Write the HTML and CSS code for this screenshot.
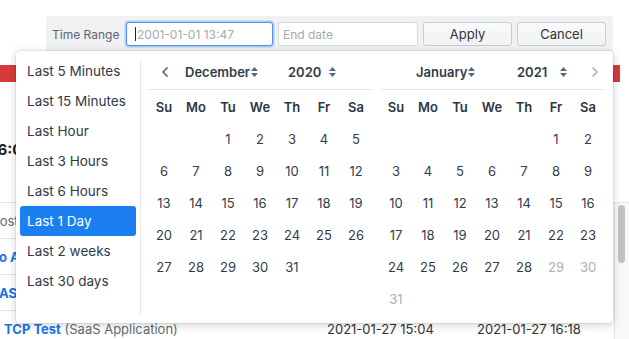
FILE: index.html
```html
<!DOCTYPE html>
<html>
<head>
<meta charset="utf-8">
<link rel="stylesheet" href="styles.css">
</head>
<body>
<div class="page">
  <div class="toolbar">
    <span class="tb-label">Time Range</span>
    <div class="field field-focus"><span class="caret"></span><span class="ph">2001-01-01 13:47</span></div>
    <div class="field field-end"><span class="ph">End date</span></div>
    <button class="btn">Apply</button>
    <button class="btn">Cancel</button>
  </div>
  <div class="alert"></div>
  <div class="summary">16:00</div>
  <div class="table-wrap">
    <div class="table">
      <div class="row"><span class="name muted indent-host">Host</span></div>
      <div class="row"><span class="name link indent-demo">Demo App</span></div>
      <div class="row"><span class="name link indent-asia">ASIA</span></div>
      <div class="row row-grid"><span class="name"><span class="link">TCP Test</span> <span class="muted">(SaaS Application)</span></span><span class="date">2021-01-27 15:04</span><span class="date">2021-01-27 16:18</span></div>
    </div>
    <div class="track"><div class="thumb"></div></div>
  </div>

  <div class="picker">
    <ul class="ranges">
      <li>Last 5 Minutes</li>
      <li>Last 15 Minutes</li>
      <li>Last Hour</li>
      <li>Last 3 Hours</li>
      <li>Last 6 Hours</li>
      <li class="active">Last 1 Day</li>
      <li>Last 2 weeks</li>
      <li>Last 30 days</li>
    </ul>
    <div class="sep"></div>
    <div class="cals">
      <div class="cal cal-left">
        <div class="cal-head">
          <span class="nav"><svg width="6" height="10" viewBox="0 0 6 10"><path d="M5 1 L1 5 L5 9" fill="none" stroke="#566070" stroke-width="1.7" stroke-linecap="round" stroke-linejoin="round"/></svg></span>
          <span class="month">December<svg class="updown" width="7" height="10" viewBox="0 0 7 10"><path d="M0 4 L3.5 0 L7 4 Z M0 6 L3.5 10 L7 6 Z" fill="#5b6577"/></svg></span>
          <span class="year">2020<svg class="updown" width="7" height="10" viewBox="0 0 7 10"><path d="M0 4 L3.5 0 L7 4 Z M0 6 L3.5 10 L7 6 Z" fill="#5b6577"/></svg></span>
        </div>
        <div class="grid">
          <span class="dow">Su</span><span class="dow">Mo</span><span class="dow">Tu</span><span class="dow">We</span><span class="dow">Th</span><span class="dow">Fr</span><span class="dow">Sa</span>
          <span></span><span></span><span>1</span><span>2</span><span>3</span><span>4</span><span>5</span>
          <span>6</span><span>7</span><span>8</span><span>9</span><span>10</span><span>11</span><span>12</span>
          <span>13</span><span>14</span><span>15</span><span>16</span><span>17</span><span>18</span><span>19</span>
          <span>20</span><span>21</span><span>22</span><span>23</span><span>24</span><span>25</span><span>26</span>
          <span>27</span><span>28</span><span>29</span><span>30</span><span>31</span>
        </div>
      </div>
      <div class="cal cal-right">
        <div class="cal-head">
          <span class="spacer"></span>
          <span class="month">January<svg class="updown" width="7" height="10" viewBox="0 0 7 10"><path d="M0 4 L3.5 0 L7 4 Z M0 6 L3.5 10 L7 6 Z" fill="#5b6577"/></svg></span>
          <span class="year">2021<svg class="updown" width="7" height="10" viewBox="0 0 7 10"><path d="M0 4 L3.5 0 L7 4 Z M0 6 L3.5 10 L7 6 Z" fill="#5b6577"/></svg></span>
          <span class="nav nav-next"><svg width="6" height="10" viewBox="0 0 6 10"><path d="M1 1 L5 5 L1 9" fill="none" stroke="#aab1ba" stroke-width="1.7" stroke-linecap="round" stroke-linejoin="round"/></svg></span>
        </div>
        <div class="grid">
          <span class="dow">Su</span><span class="dow">Mo</span><span class="dow">Tu</span><span class="dow">We</span><span class="dow">Th</span><span class="dow">Fr</span><span class="dow">Sa</span>
          <span></span><span></span><span></span><span></span><span></span><span>1</span><span>2</span>
          <span>3</span><span>4</span><span>5</span><span>6</span><span>7</span><span>8</span><span>9</span>
          <span>10</span><span>11</span><span>12</span><span>13</span><span>14</span><span>15</span><span>16</span>
          <span>17</span><span>18</span><span>19</span><span>20</span><span>21</span><span>22</span><span>23</span>
          <span>24</span><span>25</span><span>26</span><span>27</span><span>28</span><span class="off">29</span><span class="off">30</span>
          <span class="off">31</span>
        </div>
      </div>
    </div>
  </div>
</div>
</body>
</html>
```
FILE: styles.css
```css
* { box-sizing: border-box; }
html, body { margin: 0; padding: 0; background: #fff; }
body {
  font-family: Inter, "Noto Sans", "Liberation Sans", sans-serif;
  color: #323c4b;
  width: 629px;
  height: 339px;
  overflow: hidden;
}
.page { position: relative; height: 339px; display: flow-root; }

/* toolbar */
.toolbar {
  display: flex;
  align-items: center;
  gap: 5px;
  margin: 16px 0 0 46px;
  width: 567px;
  height: 36px;
  padding: 0 7px 0 6px;
  background: #f0f1f3;
  border-radius: 4px 4px 0 0;
}
.tb-label { font-size: 12px; color: #5d6572; width: 69px; flex: none; }
.field {
  flex: none;
  height: 24px;
  border: 1px solid #d6d9dd;
  border-radius: 3px;
  background: #fff;
  display: flex;
  align-items: center;
  font-size: 12px;
  color: #a3aab4;
}
.field-focus {
  width: 147px;
  padding-left: 8px;
  border-color: #4f93ee;
  box-shadow: 0 0 0 1.5px rgba(100, 160, 245, 0.45);
}
.field-end { width: 140px; padding-left: 4px; }
.caret { width: 1px; height: 14px; background: #222; margin-right: 1px; }
.btn {
  flex: none;
  width: 89px;
  height: 24px;
  border: 1px solid #c9cdd2;
  border-radius: 3px;
  background: linear-gradient(#f9fafb, #f1f2f4);
  font-family: inherit;
  font-size: 13px;
  color: #333;
  padding: 0;
}

/* background page */
.alert { margin-top: 13px; width: 620px; height: 17px; background: #d8393b; }
.summary {
  margin-top: 58px;
  height: 20px;
  line-height: 20px;
  font-size: 15px;
  font-weight: 700;
  color: #222;
  text-indent: -9px;
}
.table-wrap { display: flex; margin-top: 42px; }
.table { width: 614px; }
.row {
  height: 36px;
  border-top: 1px solid #e6e7e9;
  display: flex;
  align-items: center;
  font-size: 13px;
  white-space: nowrap;
}
.row-grid { display: grid; grid-template-columns: 323px 150px 1fr; padding-left: 4px; }
.name { display: block; }
.indent-host { margin-left: -10px; }
.indent-demo { margin-left: -30px; }
.indent-asia { margin-left: -1px; }
.muted { color: #666b73; font-weight: 400; }
.link { color: #1a73e8; font-weight: 700; }
.date { color: #333; }
.track {
  width: 15px;
  height: 140px;
  background: #f8f8f8;
  border-left: 1px solid #e6e6e6;
  border-top: 1px solid #e6e7e9;
  padding: 2px 0 0 3px;
}
.thumb { width: 7px; height: 58px; border-radius: 4px; background: #c2c2c2; }

/* picker popup */
.picker {
  position: absolute;
  top: 51px;
  left: 16px;
  width: 597px;
  height: 272px;
  background: #fff;
  border-radius: 4px;
  box-shadow: 0 2px 10px rgba(0, 0, 0, 0.18), 0 0 0 1px rgba(0, 0, 0, 0.06);
  display: flex;
}
.ranges {
  list-style: none;
  margin: 0;
  padding: 5px 4px;
  width: 124px;
  flex: none;
}
.ranges li {
  height: 30px;
  line-height: 30px;
  padding-left: 7px;
  font-size: 13.5px;
  color: #2f3a4a;
  border-radius: 3px;
  white-space: nowrap;
}
.ranges li.active { background: #1b7ff2; color: #fff; }
.sep { width: 1px; background: #e4e6e9; margin: 9px 0; flex: none; }
.cals { display: flex; gap: 8px; padding: 0 9px 0 7px; }
.cal { width: 224px; }
.cal-head {
  display: grid;
  align-items: center;
  height: 39px;
  padding: 9px 0 6px;
  border-bottom: 1px solid #e4e6e9;
  font-size: 13px;
  font-weight: 600;
  color: #323c4b;
}
.cal-left .cal-head { grid-template-columns: 37px 103px 54px 1fr; }
.cal-right .cal-head { grid-template-columns: 35px 101px 56px 1fr; margin-left: 1px; }
.nav { display: flex; justify-content: center; padding-right: 4px; }
.nav-next { justify-self: end; width: 22px; padding-right: 0; padding-left: 4px; }
.month, .year { display: flex; align-items: center; }
.month .updown { margin-left: 1px; }
.year .updown { margin-left: auto; margin-right: 6px; }
.grid {
  display: grid;
  grid-template-columns: repeat(7, 32px);
  grid-auto-rows: 32px;
  margin-top: 1px;
  font-size: 13px;
}
.grid span { display: flex; align-items: center; justify-content: center; color: #323c4b; }
.grid .dow { font-weight: 600; color: #2c3542; }
.grid .off { color: #a9b0b9; }
```
